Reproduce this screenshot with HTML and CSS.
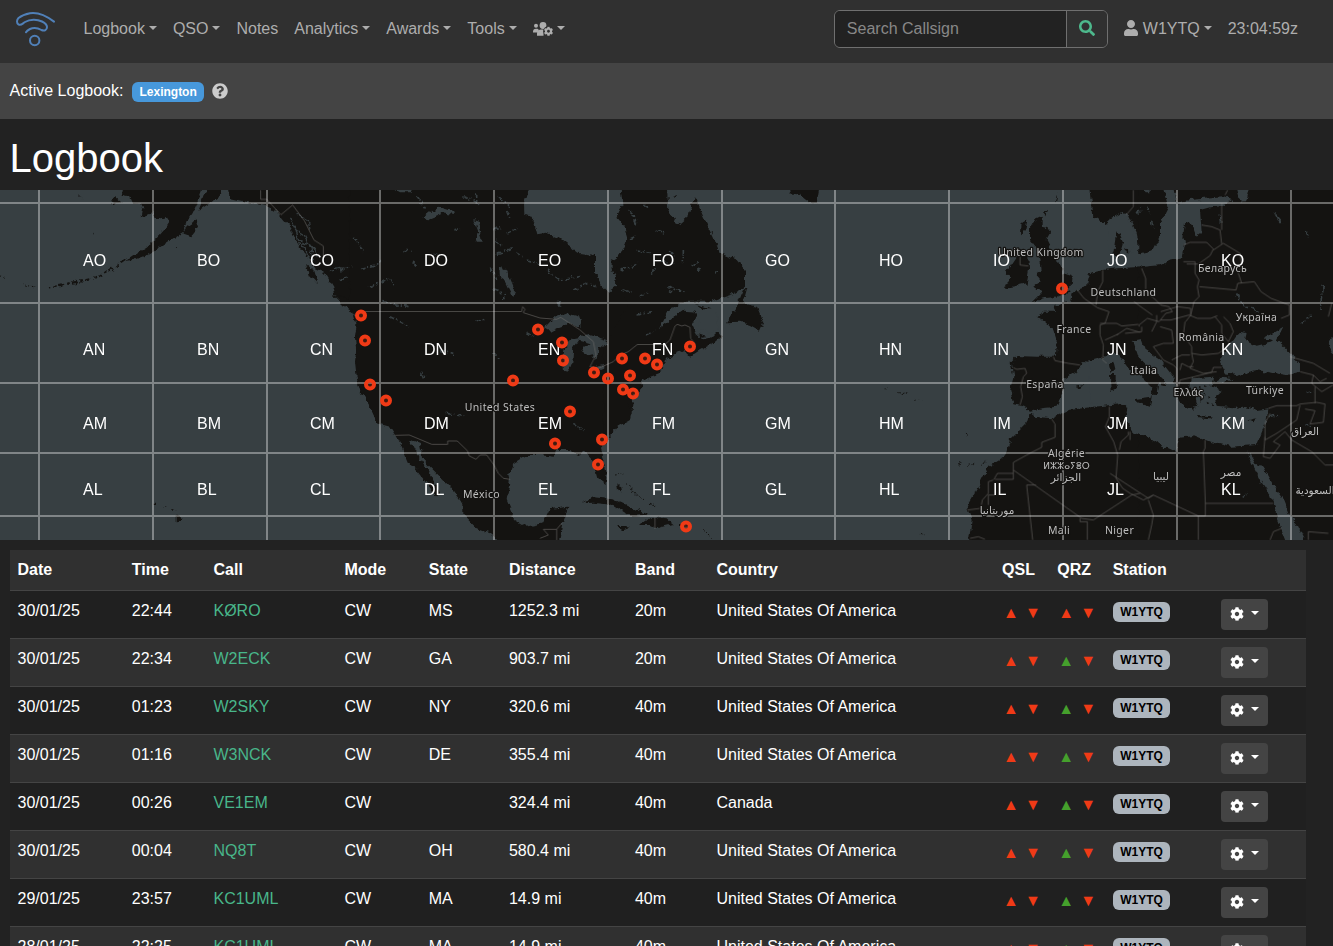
FILE: index.html
```html
<!DOCTYPE html>
<html lang="en">
<head>
<meta charset="utf-8">
<title>Logbook</title>
<link rel="stylesheet" href="styles.css">
</head>
<body>
<svg class="sprite" aria-hidden="true">
  <symbol id="cog" viewBox="0 0 512 512"><path d="M487.4 315.7l-42.6-24.6c4.3-23.2 4.3-47 0-70.2l42.6-24.6c4.9-2.8 7.1-8.6 5.5-14-11.1-35.6-30-67.8-54.7-94.6-3.8-4.1-10-5.1-14.8-2.3L380.8 110c-17.9-15.4-38.5-27.3-60.8-35.1V25.8c0-5.6-3.9-10.5-9.4-11.7-36.7-8.2-74.3-7.8-109.2 0-5.5 1.2-9.4 6.1-9.4 11.7V75c-22.2 7.9-42.8 19.8-60.8 35.1L88.7 85.5c-4.9-2.8-11-1.9-14.8 2.3-24.7 26.7-43.6 58.9-54.7 94.6-1.7 5.4.6 11.2 5.5 14L67.3 221c-4.3 23.2-4.3 47 0 70.2l-42.6 24.6c-4.9 2.8-7.1 8.6-5.5 14 11.1 35.6 30 67.8 54.7 94.6 3.8 4.1 10 5.1 14.8 2.3l42.6-24.6c17.9 15.4 38.5 27.3 60.8 35.1v49.2c0 5.6 3.9 10.5 9.4 11.7 36.7 8.2 74.3 7.8 109.2 0 5.5-1.2 9.4-6.1 9.4-11.7v-49.2c22.2-7.9 42.8-19.8 60.8-35.1l42.6 24.6c4.9 2.8 11 1.9 14.8-2.3 24.7-26.7 43.6-58.9 54.7-94.6 1.5-5.5-.7-11.3-5.6-14.1zM256 336c-44.1 0-80-35.9-80-80s35.9-80 80-80 80 35.9 80 80-35.9 80-80 80z"/></symbol>
</svg>

<nav class="navbar">
  <svg class="logo" viewBox="0 0 39 36"><path d="M38 10.6C30 4.500 22 1 14 2.200C9.500 3 5 5 2.500 7C.5 9 .5 12 2.500 13.500C5 15 6.500 12.500 9 11C14 8 21 8 26 10.500C29 12 31 13.500 31 16C31 19 28.500 20.500 25.500 19C22 17 17 16.500 14 18C12 19 11 19.500 10 21.200"/><circle cx="18.700" cy="29.500" r="4.700"/></svg>
  <div class="menu">
    <a class="drop">Logbook</a><a class="drop">QSO</a><a>Notes</a><a class="drop">Analytics</a><a class="drop">Awards</a><a class="drop">Tools</a>
    <a class="drop icon-link"><svg class="users" viewBox="0 0 20 14"><circle cx="3" cy="3.800" r="2"/><circle cx="10" cy="3.500" r="3.400"/><path d="M0 9.800a3 3 0 0 1 3-3h1.500l1.300 1L4.200 10.500H0zM4 13.800V11.500C4 9 6 7.600 8 7.600h2.500v6.200z"/><circle class="gap" cx="15.500" cy="9.300" r="5.200"/><use href="#cog" x="10.800" y="4.600" width="9.400" height="9.400"/></svg></a>
  </div>
  <div class="search"><span class="field">Search Callsign</span><button class="go"><svg viewBox="0 0 512 512"><path d="M505 442.700L405.300 343c-4.500-4.500-10.600-7-17-7H372c27.600-35.300 44-79.700 44-128C416 93.100 322.900 0 208 0S0 93.100 0 208s93.100 208 208 208c48.300 0 92.700-16.400 128-44v16.300c0 6.400 2.500 12.500 7 17l99.700 99.700c9.400 9.400 24.600 9.400 33.900 0l28.300-28.300c9.400-9.400 9.400-24.600.1-34zM208 336c-70.700 0-128-57.200-128-128 0-70.700 57.200-128 128-128 70.700 0 128 57.200 128 128 0 70.700-57.200 128-128 128z"/></svg></button></div>
  <a class="drop user"><svg viewBox="0 0 448 512"><path d="M224 256c70.700 0 128-57.300 128-128S294.700 0 224 0 96 57.300 96 128s57.300 128 128 128zm89.600 32h-16.700c-22.200 10.200-46.900 16-72.900 16s-50.600-5.800-72.900-16h-16.700C60.200 288 0 348.200 0 422.400V464c0 26.500 21.500 48 48 48h352c26.500 0 48-21.500 48-48v-41.600c0-74.200-60.200-134.400-134.400-134.400z"/></svg>W1YTQ</a>
  <span class="clock">23:04:59z</span>
</nav>

<div class="active-bar">Active Logbook: <span class="badge primary">Lexington</span><svg class="help" viewBox="0 0 512 512"><path d="M504 256c0 136.997-111.043 248-248 248S8 392.997 8 256C8 119.083 119.043 8 256 8s248 111.083 248 248zM262.655 90c-54.497 0-89.255 22.957-116.549 63.758-3.536 5.286-2.353 12.415 2.715 16.258l34.699 26.310c5.205 3.947 12.621 3.008 16.665-2.122 17.864-22.658 30.113-35.797 57.303-35.797 20.429 0 45.698 13.148 45.698 32.958 0 14.976-12.363 22.667-32.534 33.976C247.128 238.528 216 254.941 216 296v4c0 6.627 5.373 12 12 12h56c6.627 0 12-5.373 12-12v-1.333c0-28.462 83.186-29.647 83.186-106.667 0-58.002-60.165-102-116.531-102zM256 338c-25.365 0-46 20.635-46 46 0 25.364 20.635 46 46 46s46-20.636 46-46c0-25.365-20.635-46-46-46z"/></svg></div>

<h1>Logbook</h1>

<svg class="map" viewBox="0 0 1333 350" width="1333" height="350">
  <defs><filter id="rough" x="0" y="0" width="1333" height="350" filterUnits="userSpaceOnUse" color-interpolation-filters="sRGB"><feTurbulence type="fractalNoise" baseFrequency=".16" numOctaves="3" seed="4"/><feDisplacementMap in="SourceGraphic" scale="6" xChannelSelector="R" yChannelSelector="G"/></filter></defs>
  <rect class="sea" width="1333" height="350"/>
  <g filter="url(#rough)"><g transform="scale(.33333)">
    <!-- Alaska and the Pacific coast -->
    <g class="land">
      <path d="M372-20L365 15 390 20 400 42 425 40 430 55 425 82 455 70 475 88 505 80 510 95 495 118 470 145 440 170 400 195 375 212 400 210 440 195 480 172 520 145 550 125 560 95 575 72 590 40 605 0V-20Z"/>
      <path d="M625-20L612 20 595 62 640 32 662 15 668-20ZM680-20L690 25 750 38 800 48 830 65 850 90 870 110 890 155 920 200 945 235 975 248 1000 290 1005 315 1040 335 1075 362 1062 380 1075 420 1070 470 1065 515 1070 560 1080 600 1105 640 1130 690 1170 705 1190 735 1210 750V-20Z"/>
      <path d="M590 88L560 108 550 130 575 138 597 110ZM918 222L940 240 953 283 930 258ZM998 316L1030 320 1060 340 1085 360 1065 372 1035 350ZM333 32l15-8 15 12-15 8ZM527 975l18 8-6 12-12 2ZM460 938h8v6h-8ZM490 948l8 3-6 4ZM508 957l16 8-10 0Z"/>
      <path class="isles" d="M375 210L340 235 310 250 285 265 245 274 215 278 180 288 150 292"/>
      <path class="isles small" d="M110 292L70 284M14 262L0 258M235 15l10 8M280 130l6 2M530 170l4 3"/>
    </g>
    <path class="inlet" d="M868 85l20 35 25 15 20 40 5 35M885 110l10 40 20 25 15 35M890 70l35 20 5 30M900 155l30 10 25 35M985 245l30-10 20 5M1020 275l20-15M1050 340l30 20 12 10 5 30"/>
    <!-- Central North America -->
    <g transform="translate(1020)">
      <path class="land" d="M30-20H960V550L905 570 905 590 880 620 875 665 870 690 835 710 800 750 780 780 790 810 800 850 797 882 775 865 765 830 755 805 735 785 715 795 690 780 650 780 640 800 600 795 560 795 520 820 508 850 510 870 500 930 525 990 560 1010 610 1000 630 957 685 950 675 985 665 1010 655 1070H500L450 1030 410 1015 370 975 370 945 330 890 290 850 250 810 240 762 210 750 218 765 240 810 270 850 300 905 290 922 260 880 225 835 205 820 180 760 165 735 150 710 112 700 85 640 55 590 50 500 45 440 50 400 42 365 30 350Z"/>
      <path class="land" d="M725 940L760 922 820 928 890 960 925 975 870 978 820 945 760 938ZM832 1008l35 0-20 8Z"/>
      <path class="water" d="M570-20L552 40 553 75 578 80 592 133 620 128 660 145 715 188 765 195 765 250 785 285 805 305 825 290 828 265 815 240 815 210 845 190 862 150 855 110 830 80 848 45 840-20Z"/>
      <path class="water" d="M612 415L640 385 680 370 725 382 722 410 690 400 655 412 630 425ZM672 540L668 500 682 455 720 440 700 470 697 520 688 542ZM700 445L750 435 800 450 803 475 775 470 775 490 765 510 755 490 735 495 730 475 755 460ZM755 530L820 515 860 490 862 510 830 520 780 540ZM650 335h14v18h-14ZM478 228L500 240 525 300 520 325 495 275 480 265ZM250 85L295 50 345 65 340 75 310 70 265 88ZM400 90l15 5 10 60-15 0 5-25ZM160-5h60l-10 12h-30ZM490 310l6 18-8 0ZM240 540l16 20-4 8Z"/>
      <g class="speckle">
        <path d="M40 140l30 45M60 235l50-10 15-15M0 240l35-8M90 290l60-25 15 30M150 380l60 30M230 20l30 40M370 20l50 20M410 10v25M340 120l20-5M280 190l30 10M190 182h25M220 215l10 15M460 120l20-10M470 150l20 25M500 130l30-15M470 190l50-15M450 230l20 40M530 190l20 10M560 210l50 15M480 20l30 30M500 60l10 25M460 300l35 12M700 300l40-20 30 10M620 240l40 30 60-10M130 335l80 15M410 395l25-12M460 490l20 20M560 430l20 10M320 670l60 10M700 700l30 20M300 480l40 10"/>
        <path d="M865 20l20 40M885 90l50-15M850 240l40-20 25 15M900 215l30-15M850 300l30-20M905 330l15-25M880 260l20 10M940 40l10 30"/>
      </g>
    </g>
    <!-- Atlantic Canada, Greenland and the Caribbean -->
    <g transform="translate(1800)">
      <path class="land" d="M70-20H200L205 60 225 95 240 102 265 80 275 40 285 22 310 80 340 140 360 190 410 210 435 240 435 290 400 312 330 335 245 335 215 370 180 412 215 385 250 362 290 365 290 385 275 400 290 430 310 448 340 440 355 425 365 437 340 460 300 480 270 500 250 480 230 490 195 510 185 540 140 560 120 575 100 590 80 640 95 670 80 690 40 720 10 740V480L85 340 45 290 50 230 65 205 82 150 75 110 50 80 68 45Z"/>
      <path class="land" d="M378 397L410 350 430 300 442 295 430 340 470 350 490 400 480 422 450 405 420 395ZM565-20H660L650 40 630 40 600 15 570 10ZM120 1005L150 980 200 985 220 1002 170 1015 150 1005ZM50 1008L90 1010 70 1018ZM240 1002h22v8h-22ZM220 22l10-8 0 10ZM52 880l8 8 4 20-10-10Z"/>
      <path class="water" d="M205 362L240 340 290 335 350 345 355 420 330 430 310 420 290 425 300 390 280 360 250 360 200 400 180 415Z"/>
      <path class="land" d="M288 342L335 358 310 358ZM295 430l25 8-15 2Z"/>
      <path class="isles small" d="M45 855l25-3M80 880l20 30M105 910l30 25M150 940l20 5M310 1018l25 25M895 605l30 5M855 592l3 3M945 627l20 2"/>
      <g class="speckle"><path d="M90 60l20 40M130 45l15 10M65 240l50-20M110 180l40 10M170 120l25 10M275 230l25-15M290 245l15-10M120 320l25-15M150 250l20-15M210 180l10 20M180 210l40 10M70 300l30 10M110 375l50-10M140 435l30-15M340 250l20-10M205 295l10-5 8 8-6 8-10-4M250 180v40M230 300l30 5M90 150l20-10"/></g>
    </g>
    <!-- Western Europe and north Africa -->
    <g transform="translate(2760)">
      <path class="land" d="M340 92L365 80 365 110 398 118 380 150 395 180 415 220 432 250 458 258 455 285 440 300 453 307 400 322 370 325 335 337 365 307 340 290 365 272 345 250 365 240 360 200 345 170 330 150 330 110ZM270 230L290 200 325 195 327 240 320 280 255 295 270 262 255 240ZM305 100l18-12-8 35-12 10ZM372 70l12-10-4 18ZM405 30l8-20-6 28Z"/>
      <path class="land" d="M510-20L520 80 560 105 600 75 622 70 650 130 660 175 700 190V-20ZM570 135L605 118 608 160 595 205 572 185ZM612 175l20 5-8 18Z"/>
      <path class="land" d="M700 228L590 235 550 240 510 250 500 290 470 300 455 315 450 335 400 345 405 365 375 365 350 380 375 395 400 420 410 450 408 500 350 500 290 498 272 515 280 560 270 600 280 640 305 645 330 662 365 655 410 650 430 600 430 570 475 540 490 510 540 515 575 500 600 490 625 500 700 500Z"/>
      <path class="land" d="M330 668L345 680 395 685 450 660 520 650 600 643 622 650 615 690 640 715 700 740V1070H145L155 990 140 950 180 880 205 830 255 800 270 750 320 700Z"/>
      <path class="land" d="M576 520l12-10 4 25-10 15ZM572 555l20 0 0 40-18 8ZM470 590l20-5-8 8ZM640 625l30-3-4 20Z"/>
      <path class="isles small" d="M120 830l4-20M145 826l20-5M185 828l15-20M135 733l8 2M0 1030l15 8"/>
    </g>
    <!-- Eastern Europe and the Middle East -->
    <g transform="translate(3330)">
      <path class="land" d="M85-20H700V1070H85Z"/>
      <path class="water" d="M155-20H192L200 38 240 30 340 22 370 30 340 48 300 52 270 60 275 125 260 137 245 95 225 100 220 140 225 160 218 205 180 212 150 226 100 230 50 226 40 205 60 185 90 190 130 180 150 140 150 100 175 50Z"/>
      <path class="water" d="M-5 90L42 65 72 120 78 165 60 185 35 155 20 120 10 190-5 190Z"/>
      <path class="water" d="M-60 512L25 488 68 455 95 450 105 480 150 510 190 560 195 590 210 640 235 657 262 650 240 600 245 565 310 560 305 590 335 602 315 620 320 650 370 655 400 650 440 660 475 655 470 690 450 740 440 765 360 770 300 755 250 735 210 740 195 785 150 765 120 745 70 728 48 690 60 650 30 642-60 640Z"/>
      <path class="land" d="M5 480L60 455 72 460 85 500 130 545 170 578 165 585 145 580 140 610 125 622 130 595 100 565 55 535 30 500ZM75 627L125 620 120 650 80 637ZM262 678L305 682 300 688 262 684ZM412 688l30-6-15 12ZM0 520l10-8 6 25-12 12ZM0 555h20v40l-18 8ZM225 610l35 5-10 45-15-10Z"/>
      <path class="land" d="M265 590l8 3-4 6ZM285 585l6 3-5 4ZM280 610l8 5-6 4ZM298 615l6 4-5 4ZM270 630l8 4-6 4ZM290 635l8 4-6 5ZM305 640l6 6-8 3Z"/>
      <path class="water" d="M330 522L340 490 375 440 390 425 410 430 405 450 440 467 490 455 460 445 520 410 500 450 530 480 570 520 570 545 530 555 440 540 380 555 345 550ZM318 572L340 560 368 565 345 575ZM412 780L440 828 460 830 500 900 520 930 540 980 560 1000 595 1070H535L500 980 490 930 450 870 425 820ZM375-20H420L405 38 385 20ZM490 65l30 35-12 0ZM325 70l10 25-6 5ZM655 450l20-10v60l-14-15ZM100 0h22v10h-15Z"/>
      <g class="speckle"><path d="M590 125l5 20M380 310l10 25 60 35M575 400l30-25M640 290l-10 70M590 610l20-5M80 70l15-15M125 95l5 20M395 925l20-15M110 50l10 20M480 680l30-8M590 700l10 10"/></g>
    </g>
  </g></g>
  <g class="border" transform="scale(.33333)">
    <path d="M782 0V28H800L843 74 878 45 913 92 942 150 970 168V200"/>
    <path transform="translate(1020)" d="M75 364.500H545L548 350 555 358 550 368 600 384 650 388 662 382 690 400 720 420 760 455 768 495 750 530 775 535 820 515 840 495 865 485 892 463.500H975L990 450 1005 408 1012 403 1025 408 1035 405 1050 412 1052 445 1065 462M165 736L208 735 275 763H323V753H352L382 782 388 798 408 808 420 795 440 795 462 825 475 850 490 865 510 868M600 1045L625 1035 610 1018H650V1050M650 1018L665 1000M945 982v35"/>
    <path transform="translate(2760)" d="M300 190v35l25 3M280 533l10 5 25-3 5 15-10 10-8 30 5 30-7 25M400 500l5 12 40 8 35 5M472 300l20 25 40 28 35 12-12 35-15 5 0 30 10 30-2 45 12 10M548 240v35l-15 30-5 40M540 400h50l15 8 50-5M590 435l30-20 40 12M555 450l40-18M395 687l10 15 0 40-40 15 0 15-30 15-55 30V840L485 985 520 990 635 915 660 910M480 985v10h22v55M280 840V868H225M280 850H232L222 868M220 870l-15 5v35l-18 20-5 25-40 5M205 945l0-30 20 0M320 885H348M320 885L338 1050M150 1045l25-5 20 8M568 650v30l-12 30 25 45 12 40-5 70 20 30 27 18M598 780l5-25 22-20V725M640 0v50l-22 25"/>
    <path transform="translate(3330)" d="M95 235l12 30 0 40 25 20 20 20 25 5 10 15-20 5-20 25-35-10-25 20V410M72 335l20 15 35 25M152 365l50-15 40 5 0 20-15 20M152 390l30 0 55-15 25 10 40 0 20-8M242 375l10-40 15-15-5-30 5-20-12-20 0-35-35 0M220 165l20-8h50l20 20-10 20-35 25-35 0M310 180l30-20 50 30 5 40-10 20 10 30M275 105l30 5 25 10 5 42M335 120l0-80M268 290l110 10 5-20 50-5 20 30 30 20 40 15 15 5 0 30-25 10M60 725V750M340 380l20 20 10 25-15 30-20-25 0-25-20-25M225 395l-5 40 25 35 0 20 30 5 50-5 15-10M245 490l5 25-10 20 40 15 40-5M95 410l0 15-50 5M125 425l15-30 0-20M130 470l30-10 30 0-5-40-35-10M130 470l30 40 30 15 10 10 0 50M185 510l30-15 25 0M210 540l5-20 20 10 15 0M205 590l5-20 35-8 60-15 5-15 25 0M285 750v25l-5 10 6 155H490M286 940v38H265L130 915 115 925 0 850M65 912L100 930 130 915M115 930l15 45-5 30-10 45M265 978v72M540 500l70 20 50 30M570 545l40 10 20 20 20-10M610 555l-5 25 30 25 34-20M475 655l25-8 60 0 10-5 50-5 25 5-5 55-40 5 15-40-30-5M570 645l-10 45-60 40-35 20 0-50 15-30M465 740l-5 60 20 5 30-40-20-10 35-30 20 25 60 35 40 40 30 0M615 640l0-50M480 1050l10-25 25-10M595 1050v-25l60 5M655 380l10-40M345 15l8-15"/>
  </g>
  <g class="grid"><path d="M39 0V350M153 0V350M267 0V350M380 0V350M494 0V350M608 0V350M722 0V350M835 0V350M949 0V350M1063 0V350M1177 0V350M1291 0V350"/><path d="M0 13H1333M0 113H1333M0 193H1333M0 263H1333M0 326H1333"/></g>
  <g class="place">
    <text x="500" y="220.500">United States</text><text x="481.500" y="308">México</text><text x="1041" y="66">United Kingdom</text><text x="1074" y="143">France</text><text x="1045" y="198">España</text><text x="1066.500" y="267">Algérie</text><text class="tif" x="1066.500" y="279">ⵍⵣⵣⴰⵢⴻⵔ</text><text class="ar" x="1066" y="291">الجزائر</text><text class="ar" x="997" y="324">موريتانيا</text><text x="1059" y="344">Mali</text><text x="1119.500" y="344">Niger</text><text x="1123.500" y="106">Deutschland</text><text x="1144" y="184">Italia</text><text x="1222.500" y="82">Беларусь</text><text x="1256.500" y="131">Україна</text><text x="1201.500" y="151">România</text><text x="1188.500" y="206">Ελλάς</text><text x="1265" y="204">Türkiye</text><text class="ar" x="1305" y="245">العراق</text><text class="ar" x="1161" y="290">ليبيا</text><text class="ar" x="1231" y="286">مصر</text><text class="ar" x="1315" y="304">السعودية</text>
  </g>
  <g class="locator">
    <text y="76"><tspan x="83">AO</tspan><tspan x="197">BO</tspan><tspan x="310">CO</tspan><tspan x="424">DO</tspan><tspan x="538">EO</tspan><tspan x="652">FO</tspan><tspan x="765">GO</tspan><tspan x="879">HO</tspan><tspan x="993">IO</tspan><tspan x="1107">JO</tspan><tspan x="1221">KO</tspan></text>
    <text y="165"><tspan x="83">AN</tspan><tspan x="197">BN</tspan><tspan x="310">CN</tspan><tspan x="424">DN</tspan><tspan x="538">EN</tspan><tspan x="652">FN</tspan><tspan x="765">GN</tspan><tspan x="879">HN</tspan><tspan x="993">IN</tspan><tspan x="1107">JN</tspan><tspan x="1221">KN</tspan></text>
    <text y="239"><tspan x="83">AM</tspan><tspan x="197">BM</tspan><tspan x="310">CM</tspan><tspan x="424">DM</tspan><tspan x="538">EM</tspan><tspan x="652">FM</tspan><tspan x="765">GM</tspan><tspan x="879">HM</tspan><tspan x="993">IM</tspan><tspan x="1107">JM</tspan><tspan x="1221">KM</tspan></text>
    <text y="305"><tspan x="83">AL</tspan><tspan x="197">BL</tspan><tspan x="310">CL</tspan><tspan x="424">DL</tspan><tspan x="538">EL</tspan><tspan x="652">FL</tspan><tspan x="765">GL</tspan><tspan x="879">HL</tspan><tspan x="993">IL</tspan><tspan x="1107">JL</tspan><tspan x="1221">KL</tspan></text>
  </g>
  <g class="pins"><circle cx="361" cy="125.500" r="4"/><circle cx="365" cy="150.500" r="4"/><circle cx="370" cy="194.500" r="4"/><circle cx="386" cy="210.500" r="4"/><circle cx="538" cy="139.500" r="4"/><circle cx="562" cy="152.500" r="4"/><circle cx="563" cy="170.500" r="4"/><circle cx="594" cy="182.500" r="4"/><circle cx="608" cy="188.500" r="4"/><circle cx="622" cy="168.500" r="4"/><circle cx="645" cy="168.500" r="4"/><circle cx="657" cy="174.500" r="4"/><circle cx="630" cy="185.500" r="4"/><circle cx="623" cy="199.500" r="4"/><circle cx="633" cy="203.500" r="4"/><circle cx="513" cy="190.500" r="4"/><circle cx="570" cy="221.500" r="4"/><circle cx="555" cy="253.500" r="4"/><circle cx="602" cy="249.500" r="4"/><circle cx="598" cy="274.500" r="4"/><circle cx="690" cy="156.500" r="4"/><circle cx="686" cy="336.500" r="4"/><circle cx="1062" cy="98.500" r="4"/></g>
</svg>

<table class="log">
  <colgroup><col class="c-date"><col class="c-time"><col class="c-call"><col class="c-mode"><col class="c-state"><col class="c-dist"><col class="c-band"><col class="c-country"><col class="c-qsl"><col class="c-qrz"><col class="c-station"><col></colgroup>
  <thead><tr><th>Date</th><th>Time</th><th>Call</th><th>Mode</th><th>State</th><th>Distance</th><th>Band</th><th>Country</th><th>QSL</th><th>QRZ</th><th>Station</th><th></th></tr></thead>
  <tbody>
    <tr><td>30/01/25</td><td>22:44</td><td><a>KØRO</a></td><td>CW</td><td>MS</td><td>1252.3 mi</td><td>20m</td><td>United States Of America</td><td class="qsl"><i>▲</i><i>▼</i></td><td class="qsl"><i>▲</i><i>▼</i></td><td><span class="badge">W1YTQ</span></td><td><button class="tool drop"><svg><use href="#cog"/></svg></button></td></tr>
    <tr><td>30/01/25</td><td>22:34</td><td><a>W2ECK</a></td><td>CW</td><td>GA</td><td>903.7 mi</td><td>20m</td><td>United States Of America</td><td class="qsl"><i>▲</i><i>▼</i></td><td class="qsl"><i class="ok">▲</i><i>▼</i></td><td><span class="badge">W1YTQ</span></td><td><button class="tool drop"><svg><use href="#cog"/></svg></button></td></tr>
    <tr><td>30/01/25</td><td>01:23</td><td><a>W2SKY</a></td><td>CW</td><td>NY</td><td>320.6 mi</td><td>40m</td><td>United States Of America</td><td class="qsl"><i>▲</i><i>▼</i></td><td class="qsl"><i class="ok">▲</i><i>▼</i></td><td><span class="badge">W1YTQ</span></td><td><button class="tool drop"><svg><use href="#cog"/></svg></button></td></tr>
    <tr><td>30/01/25</td><td>01:16</td><td><a>W3NCK</a></td><td>CW</td><td>DE</td><td>355.4 mi</td><td>40m</td><td>United States Of America</td><td class="qsl"><i>▲</i><i>▼</i></td><td class="qsl"><i class="ok">▲</i><i>▼</i></td><td><span class="badge">W1YTQ</span></td><td><button class="tool drop"><svg><use href="#cog"/></svg></button></td></tr>
    <tr><td>30/01/25</td><td>00:26</td><td><a>VE1EM</a></td><td>CW</td><td></td><td>324.4 mi</td><td>40m</td><td>Canada</td><td class="qsl"><i>▲</i><i>▼</i></td><td class="qsl"><i class="ok">▲</i><i>▼</i></td><td><span class="badge">W1YTQ</span></td><td><button class="tool drop"><svg><use href="#cog"/></svg></button></td></tr>
    <tr><td>30/01/25</td><td>00:04</td><td><a>NQ8T</a></td><td>CW</td><td>OH</td><td>580.4 mi</td><td>40m</td><td>United States Of America</td><td class="qsl"><i>▲</i><i>▼</i></td><td class="qsl"><i class="ok">▲</i><i>▼</i></td><td><span class="badge">W1YTQ</span></td><td><button class="tool drop"><svg><use href="#cog"/></svg></button></td></tr>
    <tr><td>29/01/25</td><td>23:57</td><td><a>KC1UML</a></td><td>CW</td><td>MA</td><td>14.9 mi</td><td>40m</td><td>United States Of America</td><td class="qsl"><i>▲</i><i>▼</i></td><td class="qsl"><i class="ok">▲</i><i>▼</i></td><td><span class="badge">W1YTQ</span></td><td><button class="tool drop"><svg><use href="#cog"/></svg></button></td></tr>
    <tr><td>28/01/25</td><td>22:25</td><td><a>KC1UML</a></td><td>CW</td><td>MA</td><td>14.9 mi</td><td>40m</td><td>United States Of America</td><td class="qsl"><i>▲</i><i>▼</i></td><td class="qsl"><i class="ok">▲</i><i>▼</i></td><td><span class="badge">W1YTQ</span></td><td><button class="tool drop"><svg><use href="#cog"/></svg></button></td></tr>
  </tbody>
</table>
</body>
</html>
```

FILE: styles.css
```css
* { box-sizing: border-box; }
html, body { height: 946px; overflow: hidden; }
body { margin: 0; background: #222; color: #fff; font: 16px/24px "Liberation Sans", Arial, sans-serif; }
.sprite { display: none; }
svg { fill: currentColor; }

.navbar { display: flex; align-items: center; height: 63px; padding: 0 35px 6px 16px; background: #303030; color: #adadad; }
.logo { width: 39px; height: 36px; fill: none; stroke: #5080b8; stroke-width: 2; stroke-linecap: round; }
.menu { display: flex; margin-left: 20.5px; }
.menu a { padding: 0 8px; white-space: nowrap; }
.drop::after { content: ""; display: inline-block; margin-left: 4px; vertical-align: 4px; border: 4px solid transparent; border-top-color: currentColor; border-bottom: 0; }
.users { width: 20px; height: 14px; vertical-align: -2px; }
.users .gap { fill: #303030; }
.search { display: flex; width: 274px; height: 38px; margin-left: auto; border: 1px solid #6f6f6f; border-radius: 6px; overflow: hidden; }
.field { flex: 1; padding: 6px 12px; background: #222; color: #888; }
.go { width: 41px; padding: 0; border: 0; border-left: 1px solid #6f6f6f; background: #303030; color: #4db88c; }
.go svg { display: block; width: 16px; height: 16px; margin: -2px auto 0; }
.user { margin-left: 16px; white-space: nowrap; }
.user svg { width: 14px; height: 16px; margin-right: 5px; vertical-align: -2px; }
.clock { margin-left: 16px; }

.active-bar { display: flex; align-items: center; height: 56px; padding-left: 9.6px; background: #444; }
.badge { display: inline-block; height: 20px; padding: 4px 7.5px; border-radius: 6px; background: #adb5bd; color: #000; font-size: 12px; font-weight: 700; line-height: 12px; vertical-align: -1px; }
.badge.primary { margin-left: 8.500px; margin-top: 2px; background: #4798db; color: #fff; }
.help { width: 16px; height: 16px; margin: -1px 0 0 8px; color: #ccc; }
h1 { margin: 0; padding: 15px 9.600px 8px; font-size: 40px; font-weight: 400; line-height: 48px; }

.map { display: block; }
.sea { fill: #373f42; }
.land { fill: #141311; }
.water { fill: #373f42; }
.isles { fill: none; stroke: #141311; stroke-width: 7; stroke-dasharray: 16 7 8 9; }
.isles.small { stroke-width: 3; stroke-dasharray: 5 5; }
.inlet { fill: none; stroke: #373f42; stroke-width: 4; }
.speckle { fill: none; stroke: #373f42; stroke-width: 5; stroke-dasharray: 14 6 5 8; }
.border { fill: none; stroke: #777472; stroke-width: 2.200; opacity: .75; }
.grid { fill: none; stroke: #fff; stroke-width: 2; opacity: .37; }
.place { font: 10.500px "Noto Sans", sans-serif; letter-spacing: .350px; text-anchor: middle; fill: #bebebe; stroke: #141311; stroke-width: 2.500px; paint-order: stroke; stroke-linejoin: round; }
.place .ar { letter-spacing: 0; font-family: "DejaVu Sans", sans-serif; font-size: 10.500px; }
.place .tif { letter-spacing: 0; font-family: "DejaVu Sans", sans-serif; font-size: 9px; }
.locator { font-size: 16px; fill: #fff; }
.pins { fill: #f03a16; fill-opacity: .2; stroke: #f03a16; stroke-width: 4; }

.log { width: 1296px; margin: 10px 0 0 10px; table-layout: fixed; border-collapse: separate; border-spacing: 0; }
.log th, .log td { padding: 8px 8px 8px 7.500px; border-bottom: 1px solid #444; text-align: left; vertical-align: top; white-space: nowrap; line-height: 24px; }
.log td { height: 48px; background: #202020; }
.log th, .log tr:nth-child(even) td { background: #303030; }
.log td:last-child { padding-bottom: 0; }
.log td .badge { vertical-align: 0; }
.c-date { width: 114.300px; } .c-time { width: 81.700px; } .c-call { width: 131px; } .c-mode { width: 84.300px; } .c-state { width: 80.200px; } .c-dist { width: 126px; } .c-band { width: 81.500px; } .c-country { width: 285.600px; } .c-qsl { width: 55.200px; } .c-qrz { width: 55.400px; } .c-station { width: 108.300px; }
.log a { color: #48b68a; }
.qsl i { display: inline-block; width: 22px; padding-left: 1px; color: #f03a16; font-style: normal; }
.log .qsl { padding-top: 10px; padding-right: 0; padding-bottom: 0; }
.qsl .ok { color: #45a02c; }
.tool { display: flex; align-items: center; width: 47px; height: 31px; padding: 0 9px; border: 0; border-radius: 4px; background: #444; color: #fff; }
.tool svg { width: 14px; height: 14px; margin-top: -1px; }
.tool.drop::after { margin: -3px 0 0 7px; }
```
